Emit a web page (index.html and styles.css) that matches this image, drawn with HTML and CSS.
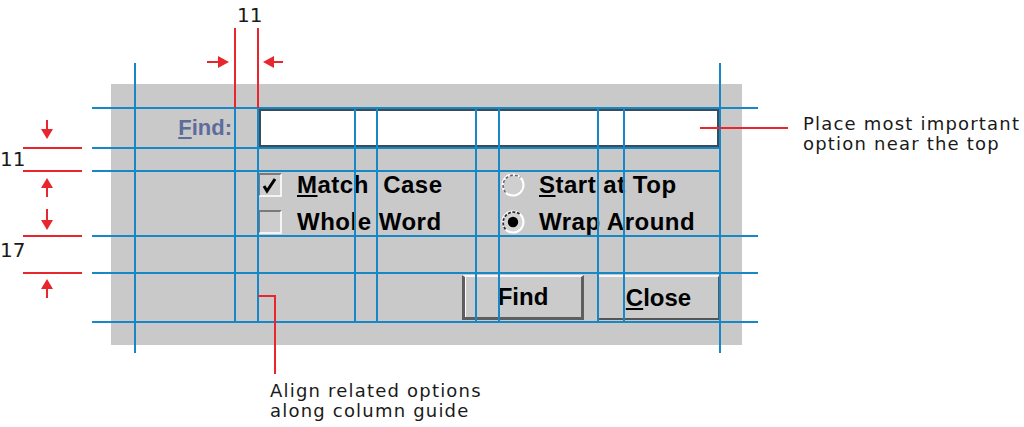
FILE: index.html
```html
<!DOCTYPE html>
<html>
<head>
<meta charset="utf-8">
<link rel="stylesheet" href="styles.css">
</head>
<body>
<div class="stage">
  <div class="panel">
    <label class="find-label"><u>F</u>ind:</label>
    <div class="textbox"></div>
    <div class="checks">
      <div class="opt">
        <span class="check">
          <svg width="20" height="20" viewBox="0 0 20 20"><polyline points="4,11 7,16 15,4" fill="none" stroke="#000" stroke-width="3" stroke-linejoin="miter"/></svg>
        </span>
        <span class="opt-text"><u>M</u>atch&nbsp; Case</span>
      </div>
      <div class="opt">
        <span class="check"></span>
        <span class="opt-text">Whole Word</span>
      </div>
    </div>
    <div class="radios">
      <div class="opt">
        <svg class="radio" width="24" height="24" viewBox="0 0 24 24">
          <circle cx="12" cy="12" r="10.5" fill="#cfcfcf" stroke="#fff" stroke-width="2"/>
          <path d="M4.6 19.4 A10.5 10.5 0 0 1 19.4 4.6" fill="none" stroke="#6b6b6b" stroke-width="1.6" stroke-dasharray="3 2"/>
        </svg>
        <span class="opt-text"><u>S</u>tart at Top</span>
      </div>
      <div class="opt">
        <svg class="radio" width="24" height="24" viewBox="0 0 24 24">
          <circle cx="12" cy="12" r="10.5" fill="#d4d4d4" stroke="#fff" stroke-width="2"/>
          <path d="M4.6 19.4 A10.5 10.5 0 0 1 19.4 4.6" fill="none" stroke="#333" stroke-width="1.8" stroke-dasharray="3 1.5"/>
          <circle cx="12" cy="12" r="5.2" fill="#000"/>
        </svg>
        <span class="opt-text">Wrap Around</span>
      </div>
    </div>
    <div class="buttons">
      <button class="btn btn-default">Find</button>
      <button class="btn"><u>C</u>lose</button>
    </div>
  </div>

  <svg class="overlay" width="1024" height="427" viewBox="0 0 1024 427">
    <g stroke="#1688c8" stroke-width="2" fill="none">
      <line x1="92" y1="108" x2="758" y2="108"/>
      <line x1="92" y1="148" x2="720" y2="148"/>
      <line x1="92" y1="171" x2="720" y2="171"/>
      <line x1="92" y1="236" x2="758" y2="236"/>
      <line x1="92" y1="273" x2="758" y2="273"/>
      <line x1="92" y1="322" x2="758" y2="322"/>
      <line x1="135" y1="63" x2="135" y2="353"/>
      <line x1="720" y1="63" x2="720" y2="353"/>
      <line x1="235" y1="108" x2="235" y2="322"/>
      <line x1="258" y1="108" x2="258" y2="322"/>
      <line x1="355" y1="108" x2="355" y2="322"/>
      <line x1="377" y1="108" x2="377" y2="322"/>
      <line x1="476" y1="108" x2="476" y2="322"/>
      <line x1="499" y1="108" x2="499" y2="322"/>
      <line x1="598" y1="108" x2="598" y2="322"/>
      <line x1="624" y1="108" x2="624" y2="322"/>
    </g>
    <g stroke="#e8262e" stroke-width="2" fill="none">
      <line x1="235" y1="28" x2="235" y2="108"/>
      <line x1="258" y1="28" x2="258" y2="108"/>
      <line x1="207" y1="62" x2="221" y2="62"/>
      <line x1="272" y1="62" x2="283" y2="62"/>
      <line x1="23" y1="148" x2="82" y2="148"/>
      <line x1="23" y1="171" x2="82" y2="171"/>
      <line x1="23" y1="236" x2="82" y2="236"/>
      <line x1="23" y1="273" x2="82" y2="273"/>
      <line x1="47" y1="120" x2="47" y2="131"/>
      <line x1="47" y1="186" x2="47" y2="197"/>
      <line x1="47" y1="209" x2="47" y2="221"/>
      <line x1="47" y1="287" x2="47" y2="298"/>
      <line x1="700" y1="128" x2="788" y2="128"/>
      <polyline points="258,296 275,296 275,374"/>
    </g>
    <g fill="#e8262e">
      <polygon points="218,56 229,62 218,68"/>
      <polygon points="274,56 263,62 274,68"/>
      <polygon points="41,129 53,129 47,139"/>
      <polygon points="41,188 53,188 47,178"/>
      <polygon points="41,220 53,220 47,230"/>
      <polygon points="41,289 53,289 47,279"/>
    </g>
  </svg>

  <span class="dim dim-top">11</span>
  <span class="dim dim-left1">11</span>
  <span class="dim dim-left2">17</span>
  <p class="note note-right">Place most important<br>option near the top</p>
  <p class="note note-bottom">Align related options<br>along column guide</p>
</div>
</body>
</html>
```

FILE: styles.css
```css
html, body {
  margin: 0;
  padding: 0;
  background: #fff;
}

.stage {
  position: relative;
  width: 1024px;
  height: 427px;
  padding: 84px 0 0 111px;
  box-sizing: border-box;
  overflow: hidden;
  font-family: "Liberation Sans", Arial, sans-serif;
}

.panel {
  width: 631px;
  height: 261px;
  background: #c9c9c9;
  display: grid;
  grid-template-columns: 24px 100px 23px 97px 22px 99px 23px 99px 26px 96px 22px;
  grid-template-rows: 24px 40px 23px 65px 37px 49px 23px;
}

.find-label {
  grid-column: 2;
  grid-row: 2;
  align-self: center;
  justify-self: end;
  margin-right: 3px;
  font-size: 22px;
  font-weight: bold;
  color: #5d6c9b;
  line-height: 24px;
}

u {
  text-decoration: underline;
  text-decoration-thickness: 2px;
  text-underline-offset: 2px;
}

.textbox {
  grid-column: 4 / 11;
  grid-row: 2;
  background: #fff;
  border: 3px solid #3b4c58;
  box-sizing: border-box;
}

.checks,
.radios {
  grid-row: 4;
  display: flex;
  flex-direction: column;
  gap: 13px;
  padding-top: 2px;
}

.checks { grid-column: 4 / 7; }
.radios { grid-column: 8 / 11; padding-left: 2px; }

.opt {
  display: flex;
  align-items: center;
  height: 24px;
  gap: 15px;
}

.radios .opt { gap: 14px; }

.opt-text {
  font-size: 24px;
  font-weight: bold;
  color: #000;
  line-height: 24px;
  letter-spacing: 0.5px;
  white-space: nowrap;
}

.check {
  width: 24px;
  height: 24px;
  box-sizing: border-box;
  border-top: 2px solid #7a7a7a;
  border-left: 2px solid #7a7a7a;
  border-right: 2px solid #f4f4f4;
  border-bottom: 2px solid #f4f4f4;
  background: #cdcdcd;
  display: flex;
  align-items: center;
  justify-content: center;
}

.check svg {
  display: block;
  flex: none;
}

.radio {
  display: block;
  flex: none;
}

.buttons {
  grid-column: 6 / 11;
  grid-row: 6;
  display: flex;
  justify-content: flex-end;
  align-items: center;
  gap: 13px;
}

.btn {
  width: 123px;
  height: 45px;
  margin: 0;
  padding: 0;
  box-sizing: border-box;
  background: #cbcbcb;
  font-family: "Liberation Sans", Arial, sans-serif;
  font-size: 24px;
  font-weight: bold;
  color: #000;
  border-top: 2px solid #f6f6f6;
  border-left: 2px solid #f6f6f6;
  border-right: 2px solid #555;
  border-bottom: 2px solid #555;
  line-height: 24px;
}

.btn-default {
  width: 122px;
  border-left: 3px solid #5e5e5e;
  border-right: 3px solid #5e5e5e;
  border-bottom: 3px solid #5e5e5e;
  box-shadow: inset 1px 0 0 #fff;
}

.overlay {
  position: absolute;
  left: 0;
  top: 0;
  pointer-events: none;
}

.dim {
  position: absolute;
  font-family: "DejaVu Sans", sans-serif;
  font-size: 20px;
  line-height: 20px;
  color: #1a1a1a;
}

.dim-top { left: 237px; top: 5px; }
.dim-left1 { left: 0; top: 149px; }
.dim-left2 { left: 0; top: 240px; }

.note {
  position: absolute;
  margin: 0;
  font-family: "DejaVu Sans", sans-serif;
  font-size: 18px;
  line-height: 20px;
  letter-spacing: 1.2px;
  color: #1a1a1a;
  white-space: nowrap;
}

.note-right { left: 803px; top: 114px; }
.note-bottom { left: 270px; top: 381px; }
```
